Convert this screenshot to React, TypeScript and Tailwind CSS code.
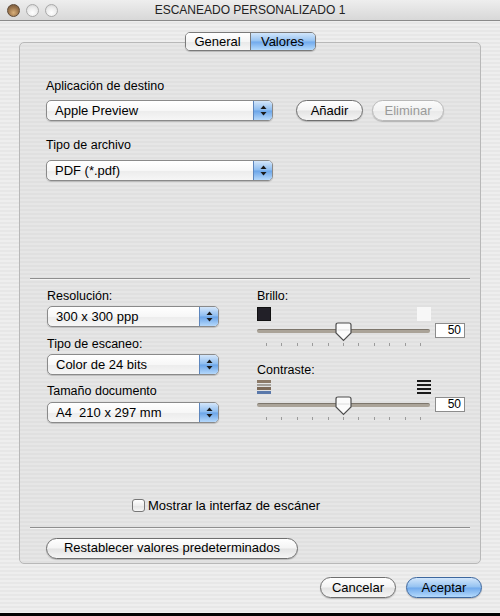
import type { ReactNode } from 'react';

// Aqua-style scan settings dialog
const stripes =
  'bg-[repeating-linear-gradient(180deg,#eeeeee_0px,#eeeeee_2px,#e7e7e7_2px,#e7e7e7_4px)]';

function Light({ active }: { active?: boolean }) {
  return (
    <span
      className={
        active
          ? 'w-[13px] h-[13px] rounded-full border border-[#5f4a36] bg-[radial-gradient(circle_at_50%_70%,#d9b07a_0%,#9a744c_55%,#6c5038_100%)]'
          : 'w-[13px] h-[13px] rounded-full border border-[#a9a9a9] bg-[radial-gradient(circle_at_50%_70%,#ffffff_0%,#e9e9e9_60%,#c9c9c9_100%)]'
      }
    />
  );
}

function TitleBar() {
  return (
    <div className="relative h-[21px] flex items-center border-b border-[#8a8a8a] bg-gradient-to-b from-[#eeeeee] to-[#d8d8d8]">
      <div className="flex gap-[6px] pl-[7px]">
        <Light active />
        <Light />
        <Light />
      </div>
      <div className="absolute inset-0 flex items-center justify-center text-[12px] text-[#222]">
        ESCANEADO PERSONALIZADO 1
      </div>
    </div>
  );
}

function Arrows() {
  return (
    <svg width="7" height="11" viewBox="0 0 7 11">
      <path d="M3.5 0.5 L6.5 4 H0.5 Z" fill="#1a1a1a" />
      <path d="M3.5 10.5 L6.5 7 H0.5 Z" fill="#1a1a1a" />
    </svg>
  );
}

function Popup({ label, className }: { label: string; className: string }) {
  return (
    <div
      className={`flex h-[21px] rounded-[5px] border border-[#8a8a8a] overflow-hidden bg-[linear-gradient(180deg,#ffffff_0%,#f7f7f7_50%,#ececec_51%,#f6f6f6_100%)] shadow-[0_1px_1px_rgba(0,0,0,0.18)] ${className}`}
    >
      <span className="flex-1 pl-[8px] leading-[19px] text-[13px]">{label}</span>
      <span className="w-[19px] flex items-center justify-center border-l border-[#5d86bd] bg-[linear-gradient(180deg,#d4e6fa_0%,#8cbcf0_48%,#6aa4e8_52%,#b5d8fb_100%)]">
        <Arrows />
      </span>
    </div>
  );
}

function Button({
  children,
  className = '',
  primary,
  disabled,
}: {
  children: ReactNode;
  className?: string;
  primary?: boolean;
  disabled?: boolean;
}) {
  const skin = primary
    ? 'border-[#3d679e] bg-[linear-gradient(180deg,#d2e6fb_0%,#94c2f1_48%,#70a9ec_52%,#b4dafc_100%)] text-black'
    : disabled
      ? 'border-[#b9b9b9] bg-[linear-gradient(180deg,#fbfbfb_0%,#f2f2f2_50%,#e9e9e9_51%,#f3f3f3_100%)] text-[#9a9a9a]'
      : 'border-[#6f6f6f] bg-[linear-gradient(180deg,#ffffff_0%,#f4f4f4_48%,#e3e3e3_52%,#f5f5f5_100%)] text-black';
  return (
    <div
      className={`h-[21px] rounded-full border flex items-center justify-center text-[13px] shadow-[0_1px_1px_rgba(0,0,0,0.2)] ${skin} ${className}`}
    >
      {children}
    </div>
  );
}

function Thumb() {
  return (
    <svg width="17" height="20" viewBox="0 0 17 20" className="absolute top-[-8px]" style={{ left: 78 }}>
      <path
        d="M3 1 H14 Q16 1 16 3 V11 L8.5 18.5 L1 11 V3 Q1 1 3 1 Z"
        fill="#fbfbfb"
        stroke="#4d4d4d"
        strokeWidth="1.2"
      />
      <path d="M2.5 8 H14.5" stroke="#dcdcdc" />
    </svg>
  );
}

function Slider() {
  return (
    <div className="flex items-start gap-[5px]">
      <div className="w-[173px]">
        <div className="relative h-[4px] mt-[6px] rounded-full bg-[#aaa398] border-t border-[#7d766c]">
          <Thumb />
        </div>
        <div className="flex justify-between px-[9px] mt-[10px]">
          {Array.from({ length: 11 }).map((_, i) => (
            <span key={i} className="w-px h-[3px] bg-[#9b9b9b]" />
          ))}
        </div>
      </div>
      <div className="w-[30px] h-[15px] border border-[#8c8c8c] bg-white text-[12px] leading-[13px] text-right pr-[3px]">
        50
      </div>
    </div>
  );
}

function Checkbox() {
  return (
    <span className="w-[13px] h-[13px] rounded-[3px] border border-[#777] bg-[linear-gradient(180deg,#ffffff_0%,#eeeeee_50%,#e2e2e2_51%,#f5f5f5_100%)]" />
  );
}

export default function App() {
  return (
    <div
      className={`w-[500px] h-[616px] flex flex-col overflow-hidden border-b-[3px] border-black text-black font-['Liberation_Sans',Arial,sans-serif] ${stripes}`}
    >
      <TitleBar />

      <div className="flex-1 flex flex-col px-[19px]">
        {/* tab switcher sits on top of the group box edge */}
        <div className="self-center relative z-10 mt-[11px] -mb-[9px] flex h-[19px] rounded-[5px] border border-[#7a7a7a] overflow-hidden text-[13px] shadow-[0_1px_1px_rgba(0,0,0,0.2)]">
          <span className="w-[65px] flex items-center justify-center border-r border-[#7a7a7a] bg-[linear-gradient(180deg,#ffffff_0%,#f5f5f5_50%,#e8e8e8_51%,#f6f6f6_100%)]">
            General
          </span>
          <span className="w-[64px] flex items-center justify-center bg-[linear-gradient(180deg,#d2e6fb_0%,#94c2f1_48%,#70a9ec_52%,#b4dafc_100%)]">
            Valores
          </span>
        </div>

        <div className="h-[522px] rounded-[5px] border border-[#b8b8b8] bg-[repeating-linear-gradient(180deg,#e6e6e6_0px,#e6e6e6_2px,#e0e0e0_2px,#e0e0e0_4px)] flex flex-col">
          <div className="pl-[26px] pt-[35px]">
            <div className="text-[12.5px] leading-[16px]">Aplicación de destino</div>
            <div className="flex items-center mt-[6px]">
              <Popup label="Apple Preview" className="w-[227px]" />
              <Button className="w-[67px] ml-[23px]">Añadir</Button>
              <Button className="w-[72px] ml-[9px]" disabled>
                Eliminar
              </Button>
            </div>
            <div className="text-[12.5px] leading-[16px] mt-[16px]">Tipo de archivo</div>
            <Popup label="PDF (*.pdf)" className="w-[227px] mt-[7px]" />
          </div>

          <div className="mx-[10px] mt-[97px] h-[2px] border-t border-[#8f8f8f] border-b border-b-[#f4f4f4]" />

          <div className="flex pl-[27px] pt-[8px]">
            <div className="w-[210px]">
              <div className="text-[12.5px] leading-[16px]">Resolución:</div>
              <Popup label="300 x 300 ppp" className="w-[172px] mt-[2px]" />
              <div className="text-[12.5px] leading-[16px] mt-[9px]">Tipo de escaneo:</div>
              <Popup label="Color de 24 bits" className="w-[172px] mt-[2px]" />
              <div className="text-[12.5px] leading-[16px] mt-[8px]">Tamaño documento</div>
              <Popup label="A4  210 x 297 mm" className="w-[172px] mt-[3px] whitespace-pre" />
            </div>

            <div className="flex flex-col">
              <div className="text-[12.5px] leading-[16px]">Brillo:</div>
              <div className="flex justify-between w-[174px] mt-[3px]">
                <span className="w-[14px] h-[14px] bg-[#222028] border border-[#111]" />
                <span className="w-[14px] h-[14px] bg-[#f7f7f7]" />
              </div>
              <div className="mt-[2px]">
                <Slider />
              </div>

              <div className="text-[12.5px] leading-[16px] mt-[16px]">Contraste:</div>
              <div className="flex justify-between w-[174px] mt-[2px]">
                <svg width="14" height="14" viewBox="0 0 14 14">
                  <rect x="0" y="0" width="14" height="3" fill="#8c7a68" />
                  <rect x="0" y="4" width="14" height="2" fill="#a4a09a" />
                  <rect x="0" y="7" width="14" height="3" fill="#7d6a58" />
                  <rect x="0" y="11" width="14" height="3" fill="#5a78aa" />
                </svg>
                <svg width="14" height="14" viewBox="0 0 14 14">
                  <rect x="0" y="0" width="14" height="2" fill="#1a1a1a" />
                  <rect x="0" y="4" width="14" height="2" fill="#1a1a1a" />
                  <rect x="0" y="8" width="14" height="2" fill="#1a1a1a" />
                  <rect x="0" y="12" width="14" height="2" fill="#1a1a1a" />
                </svg>
              </div>
              <div className="mt-[3px]">
                <Slider />
              </div>
            </div>
          </div>

          <div className="flex items-center gap-[3px] pl-[112px] mt-[73px] text-[13px]">
            <Checkbox />
            <span>Mostrar la interfaz de escáner</span>
          </div>

          <div className="mx-[10px] mt-[11px] h-[2px] border-t border-[#8f8f8f] border-b border-b-[#f4f4f4]" />

          <div className="pl-[26px] mt-[9px]">
            <Button className="w-[252px]">Restablecer valores predeterminados</Button>
          </div>
        </div>

        <div className="flex justify-end gap-[10px] mt-[13px] -mr-[1px]">
          <Button className="w-[76px]">Cancelar</Button>
          <Button className="w-[76px]" primary>
            Aceptar
          </Button>
        </div>
      </div>
    </div>
  );
}
